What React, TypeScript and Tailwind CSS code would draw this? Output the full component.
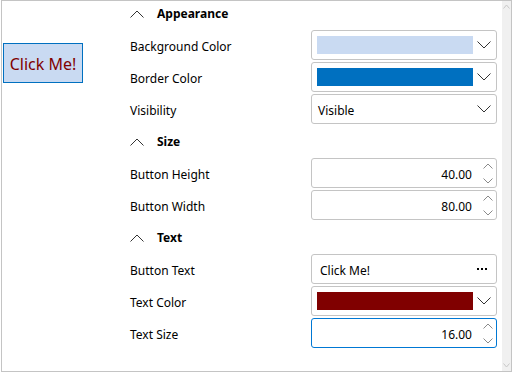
const font = { fontFamily: '"Segoe UI", "Noto Sans", "Open Sans", sans-serif' };

const Chevron = ({ up = false, className = "" }: { up?: boolean; className?: string }) => (
  <svg width="14" height="8" viewBox="0 0 14 8" className={className}>
    <path
      d={up ? "M0.5 7.5 L7 1 L13.5 7.5" : "M0.5 0.5 L7 7 L13.5 0.5"}
      fill="none"
      stroke="currentColor"
      strokeWidth="1"
    />
  </svg>
);

const SmallChevron = ({ up = false }: { up?: boolean }) => (
  <svg width="10" height="6" viewBox="0 0 10 6">
    <path
      d={up ? "M0.5 5.5 L5 1 L9.5 5.5" : "M0.5 0.5 L5 5 L9.5 0.5"}
      fill="none"
      stroke="#8a8a8a"
      strokeWidth="1"
    />
  </svg>
);

const Box = ({ children, focused = false }: { children: React.ReactNode; focused?: boolean }) => (
  <div
    className={`h-[30px] w-[186px] rounded-[3px] border flex items-center bg-white ${
      focused ? "border-[#0078d4]" : "border-[#c4c4c4]"
    }`}
  >
    {children}
  </div>
);

const ColorPicker = ({ color }: { color: string }) => (
  <Box>
    <div className="ml-[5px] w-[156px] h-[18px]" style={{ backgroundColor: color }} />
    <Chevron className="ml-[4px] text-[#333333]" />
  </Box>
);

const NumberBox = ({ value, focused = false }: { value: string; focused?: boolean }) => (
  <Box focused={focused}>
    <span className="flex-1 pt-[3px] text-right text-[12px] text-black">{value}</span>
    <div className="flex flex-col items-center gap-[9px] ml-[11px] mr-[3px]">
      <SmallChevron up />
      <SmallChevron />
    </div>
  </Box>
);

const Header = ({ title, first = false }: { title: string; first?: boolean }) => (
  <div className={`flex items-center ${first ? "h-[28px] pb-[2px]" : "h-[32px] pt-[2px]"}`}>
    <Chevron up className="text-[#333333]" />
    <span className="ml-[13px] text-[12px] font-bold text-black">{title}</span>
  </div>
);

const Row = ({ label, children }: { label: string; children: React.ReactNode }) => (
  <div className="flex items-center h-[32px]">
    <span className="flex-1 pt-[3px] text-[12px] text-black">{label}</span>
    {children}
  </div>
);

export default function App() {
  return (
    <div className="w-[512px] h-[373px] bg-white pl-px" style={font}>
      <div className="w-[511px] h-[372px] border border-[#c4c4c4] flex overflow-hidden">
        {/* Preview */}
        <div className="w-[118px] shrink-0 pt-[42px]">
          <div className="ml-px w-[80px] h-[40px] bg-[#c9daf2] border border-[#0070c0] flex items-center justify-center pt-[2px] text-[16px] text-[#800000]">
            Click Me!
          </div>
        </div>

        {/* Properties */}
        <div className="flex-1 pl-[10px] pr-[5px]">
          <Header title="Appearance" first />
          <Row label="Background Color">
            <ColorPicker color="#c9daf2" />
          </Row>
          <Row label="Border Color">
            <ColorPicker color="#0070c0" />
          </Row>
          <Row label="Visibility">
            <Box>
              <span className="flex-1 pl-[6px] pt-[3px] text-[12px] text-black">Visible</span>
              <Chevron className="mr-[5px] text-[#333333]" />
            </Box>
          </Row>

          <Header title="Size" />
          <Row label="Button Height">
            <NumberBox value="40.00" />
          </Row>
          <Row label="Button Width">
            <NumberBox value="80.00" />
          </Row>

          <Header title="Text" />
          <Row label="Button Text">
            <Box>
              <span className="flex-1 pl-[8px] pt-[3px] text-[12px] text-black">Click Me!</span>
              <div className="mr-[9px] flex gap-[2px]">
                <div className="w-[2px] h-[2px] bg-black" />
                <div className="w-[2px] h-[2px] bg-black" />
                <div className="w-[2px] h-[2px] bg-black" />
              </div>
            </Box>
          </Row>
          <Row label="Text Color">
            <ColorPicker color="#800000" />
          </Row>
          <Row label="Text Size">
            <NumberBox value="16.00" focused />
          </Row>
        </div>

        {/* Scrollbar */}
        <div className="w-[9px] shrink-0 bg-[#f0f0f0] flex flex-col items-center justify-between py-[3px] text-[#c8c8c8]">
          <svg width="7" height="5" viewBox="0 0 7 5">
            <path d="M0.5 4.5 L3.5 1 L6.5 4.5" fill="none" stroke="currentColor" strokeWidth="1" />
          </svg>
          <svg width="7" height="5" viewBox="0 0 7 5">
            <path d="M0.5 0.5 L3.5 4 L6.5 0.5" fill="none" stroke="currentColor" strokeWidth="1" />
          </svg>
        </div>
      </div>
    </div>
  );
}
